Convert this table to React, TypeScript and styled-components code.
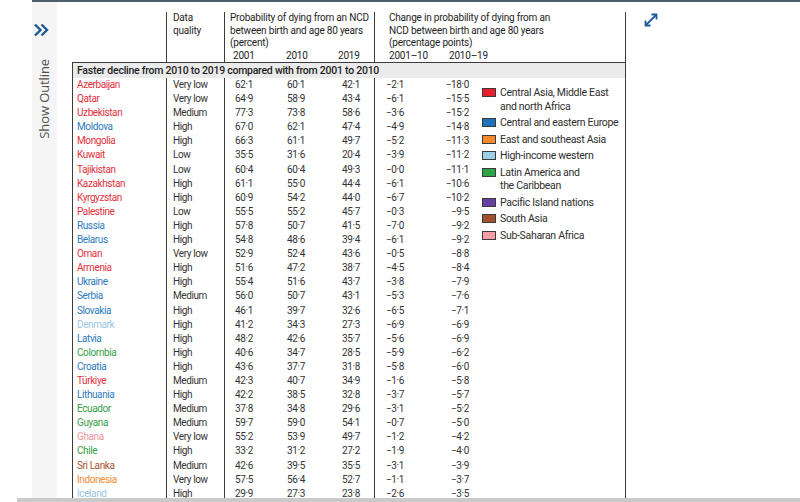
import React from "react";
import styled, { createGlobalStyle } from "styled-components";

const GlobalStyle = createGlobalStyle`
  html, body { margin: 0; padding: 0; background: #fff; }
  body {
    font-family: Roboto, "Liberation Sans", sans-serif;
    color: #333;
  }
`;

type Region = "cam" | "cee" | "ese" | "hiw" | "lac" | "pac" | "sa" | "ssa";

const regionColor: Record<Region, string> = {
  cam: "#e3303a",
  cee: "#2b7bbd",
  ese: "#f28a30",
  hiw: "#98c6e4",
  lac: "#36a047",
  pac: "#6a4aa0",
  sa: "#a5552a",
  ssa: "#f0959b",
};

const swatchColor: Record<Region, string> = {
  cam: "#e8202c",
  cee: "#1f72b8",
  ese: "#f6892c",
  hiw: "#9ecde6",
  lac: "#2ea446",
  pac: "#6441a0",
  sa: "#a0522d",
  ssa: "#f4a0a6",
};

type Row = [string, Region, string, string, string, string, string, string];

const rows: Row[] = [
  ["Azerbaijan", "cam", "Very low", "62·1", "60·1", "42·1", "−2·1", "−18·0"],
  ["Qatar", "cam", "Very low", "64·9", "58·9", "43·4", "−6·1", "−15·5"],
  ["Uzbekistan", "cam", "Medium", "77·3", "73·8", "58·6", "−3·6", "−15·2"],
  ["Moldova", "cee", "High", "67·0", "62·1", "47·4", "−4·9", "−14·8"],
  ["Mongolia", "cam", "High", "66·3", "61·1", "49·7", "−5·2", "−11·3"],
  ["Kuwait", "cam", "Low", "35·5", "31·6", "20·4", "−3·9", "−11·2"],
  ["Tajikistan", "cam", "Low", "60·4", "60·4", "49·3", "−0·0", "−11·1"],
  ["Kazakhstan", "cam", "High", "61·1", "55·0", "44·4", "−6·1", "−10·6"],
  ["Kyrgyzstan", "cam", "High", "60·9", "54·2", "44·0", "−6·7", "−10·2"],
  ["Palestine", "cam", "Low", "55·5", "55·2", "45·7", "−0·3", "−9·5"],
  ["Russia", "cee", "High", "57·8", "50·7", "41·5", "−7·0", "−9·2"],
  ["Belarus", "cee", "High", "54·8", "48·6", "39·4", "−6·1", "−9·2"],
  ["Oman", "cam", "Very low", "52·9", "52·4", "43·6", "−0·5", "−8·8"],
  ["Armenia", "cam", "High", "51·6", "47·2", "38·7", "−4·5", "−8·4"],
  ["Ukraine", "cee", "High", "55·4", "51·6", "43·7", "−3·8", "−7·9"],
  ["Serbia", "cee", "Medium", "56·0", "50·7", "43·1", "−5·3", "−7·6"],
  ["Slovakia", "cee", "High", "46·1", "39·7", "32·6", "−6·5", "−7·1"],
  ["Denmark", "hiw", "High", "41·2", "34·3", "27·3", "−6·9", "−6·9"],
  ["Latvia", "cee", "High", "48·2", "42·6", "35·7", "−5·6", "−6·9"],
  ["Colombia", "lac", "High", "40·6", "34·7", "28·5", "−5·9", "−6·2"],
  ["Croatia", "cee", "High", "43·6", "37·7", "31·8", "−5·8", "−6·0"],
  ["Türkiye", "cam", "Medium", "42·3", "40·7", "34·9", "−1·6", "−5·8"],
  ["Lithuania", "cee", "High", "42·2", "38·5", "32·8", "−3·7", "−5·7"],
  ["Ecuador", "lac", "Medium", "37·8", "34·8", "29·6", "−3·1", "−5·2"],
  ["Guyana", "lac", "Medium", "59·7", "59·0", "54·1", "−0·7", "−5·0"],
  ["Ghana", "ssa", "Very low", "55·2", "53·9", "49·7", "−1·2", "−4·2"],
  ["Chile", "lac", "High", "33·2", "31·2", "27·2", "−1·9", "−4·0"],
  ["Sri Lanka", "sa", "Medium", "42·6", "39·5", "35·5", "−3·1", "−3·9"],
  ["Indonesia", "ese", "Very low", "57·5", "56·4", "52·7", "−1·1", "−3·7"],
  ["Iceland", "hiw", "High", "29·9", "27·3", "23·8", "−2·6", "−3·5"],
];

const legend: { region: Region; lines: string[] }[] = [
  { region: "cam", lines: ["Central Asia, Middle East", "and north Africa"] },
  { region: "cee", lines: ["Central and eastern Europe"] },
  { region: "ese", lines: ["East and southeast Asia"] },
  { region: "hiw", lines: ["High-income western"] },
  { region: "lac", lines: ["Latin America and", "the Caribbean"] },
  { region: "pac", lines: ["Pacific Island nations"] },
  { region: "sa", lines: ["South Asia"] },
  { region: "ssa", lines: ["Sub-Saharan Africa"] },
];

const LINE = "#3c3c3c";

const Page = styled.div`
  position: relative;
  width: 800px;
  height: 502px;
  overflow: hidden;
  display: flex;
  background: #fff;
`;

const Gutter = styled.div`
  width: 32px;
  flex: none;
`;

const Frame = styled.div`
  flex: 1;
  min-width: 0;
  display: flex;
  flex-direction: column;
  border-top: 2px solid #4b5e6a;
`;

const FrameBody = styled.div`
  flex: 1;
  display: flex;
  min-height: 0;
`;

const Sidebar = styled.aside`
  width: 25px;
  flex: none;
  background: #f5f5f5;
  display: flex;
  flex-direction: column;
  align-items: flex-start;
  padding: 21px 0 0 1px;
  box-sizing: border-box;
`;

const OutlineLabel = styled.span`
  margin: 22px 0 0 3px;
  writing-mode: vertical-rl;
  transform: rotate(180deg);
  font-family: "Open Sans", "Liberation Sans", sans-serif;
  font-size: 13px;
  line-height: 17px;
  letter-spacing: -0.1px;
  color: #505050;
  white-space: nowrap;
`;

const Content = styled.main`
  flex: 1;
  display: flex;
  align-items: flex-start;
  padding: 10px 0 0 15px;
  gap: 17px;
`;

const Table = styled.div`
  width: 554px;
  flex: none;
  display: flex;
  flex-direction: column;
`;

const HeaderRow = styled.div`
  display: flex;
  height: 50px;
  border-right: 1px solid ${LINE};
  font-size: 10px;
  line-height: 12.5px;
  letter-spacing: -0.2px;
  color: #1e1e1e;
`;

const HeadBlank = styled.div`
  width: 94px;
  flex: none;
`;

const HeadCell = styled.div<{ $w: number; $pad: number }>`
  width: ${(p) => p.$w}px;
  flex: none;
  box-sizing: border-box;
  border-left: 1px solid ${LINE};
  padding-left: ${(p) => p.$pad}px;
  display: flex;
  flex-direction: column;
`;

const HeadTitle = styled.div<{ $pad: number }>`
  height: 37.5px;
  padding-left: ${(p) => p.$pad}px;
  white-space: nowrap;
`;

const YearRow = styled.div<{ $cols: string }>`
  display: grid;
  grid-template-columns: ${(p) => p.$cols};
  white-space: nowrap;
`;

const YearLabel = styled.span<{ $pad: number }>`
  padding-left: ${(p) => p.$pad}px;
`;

const BodyFrame = styled.div`
  display: flex;
  flex-direction: column;
  border-left: 1px solid ${LINE};
  border-right: 1px solid ${LINE};
`;

const GroupRow = styled.div`
  border-top: 1px solid ${LINE};
  background: #ebebeb;
  height: 15px;
  line-height: 15px;
  padding-left: 4px;
  font-size: 10.5px;
  font-weight: 500;
  letter-spacing: -0.25px;
  color: #1e1e1e;
  white-space: nowrap;
`;

const BodyArea = styled.div`
  display: flex;
`;

const RowsColumn = styled.div`
  width: 399px;
  flex: none;
  display: flex;
  flex-direction: column;
`;

const DataRow = styled.div`
  display: grid;
  grid-template-columns: 93px 58px 56px 55px 39px 56px 42px;
  height: 14.1px;
  line-height: 14.1px;
  font-size: 10px;
  letter-spacing: -0.4px;
  white-space: nowrap;
`;

const Cell = styled.span<{ $pad?: number; $sep?: boolean; $right?: boolean }>`
  box-sizing: border-box;
  padding-left: ${(p) => p.$pad ?? 0}px;
  padding-right: ${(p) => (p.$right ? 3 : 0)}px;
  text-align: ${(p) => (p.$right ? "right" : "left")};
  border-left: ${(p) => (p.$sep ? `1px solid ${LINE}` : "none")};
  color: #333;
`;

const Country = styled(Cell)<{ $region: Region }>`
  color: ${(p) => regionColor[p.$region]};
`;

const LegendColumn = styled.div`
  width: 153px;
  flex: none;
  padding: 8px 0 0 10px;
  box-sizing: border-box;
  display: flex;
  flex-direction: column;
  gap: 3px;
`;

const LegendItem = styled.div`
  display: flex;
  align-items: flex-start;
  gap: 4px;
  font-size: 10.5px;
  line-height: 13.5px;
  letter-spacing: -0.3px;
  color: #2e2e2e;
  white-space: nowrap;
`;

const Swatch = styled.span<{ $region: Region }>`
  width: 14px;
  height: 9px;
  flex: none;
  margin-top: 2px;
  box-sizing: border-box;
  border: 1px solid #3a3a3a;
  background: ${(p) => swatchColor[p.$region]};
`;

const ExpandButton = styled.button`
  border: none;
  background: none;
  padding: 0;
  width: 16px;
  height: 16px;
  display: flex;
  color: #1d5d99;
  cursor: pointer;
`;

const Scrollbar = styled.div`
  position: absolute;
  left: 17px;
  right: 0;
  bottom: 0;
  height: 4px;
  background: #cacaca;
`;

const Chevrons = () => (
  <svg width="16" height="14" viewBox="0 0 16 14" fill="none">
    <path d="M2 1.5 L7.5 7 L2 12.5 M8.5 1.5 L14 7 L8.5 12.5" stroke="#1d5b95" strokeWidth="2.4" strokeLinejoin="miter" />
  </svg>
);

const ExpandIcon = () => (
  <svg width="16" height="16" viewBox="0 0 16 16" fill="none">
    <path d="M3 13 L13 3" stroke="currentColor" strokeWidth="1.8" />
    <path d="M8.5 2.5 H13.5 V7.5" stroke="currentColor" strokeWidth="1.8" />
    <path d="M2.5 8.5 V13.5 H7.5" stroke="currentColor" strokeWidth="1.8" />
  </svg>
);

export default function App() {
  return (
    <>
      <GlobalStyle />
      <Page>
        <Gutter />
        <Frame>
          <FrameBody>
            <Sidebar>
              <Chevrons />
              <OutlineLabel>Show Outline</OutlineLabel>
            </Sidebar>
            <Content>
              <Table>
                <HeaderRow>
                  <HeadBlank />
                  <HeadCell $w={58} $pad={6}>
                    <span>Data</span>
                    <span>quality</span>
                  </HeadCell>
                  <HeadCell $w={150} $pad={0}>
                    <HeadTitle $pad={5}>
                      Probability of dying from an NCD
                      <br />
                      between birth and age 80 years
                      <br />
                      (percent)
                    </HeadTitle>
                    <YearRow $cols="55px 55px 39px">
                      <YearLabel $pad={8}>2001</YearLabel>
                      <YearLabel $pad={6}>2010</YearLabel>
                      <YearLabel $pad={3}>2019</YearLabel>
                    </YearRow>
                  </HeadCell>
                  <HeadCell $w={251} $pad={0}>
                    <HeadTitle $pad={14}>
                      Change in probability of dying from an
                      <br />
                      NCD between birth and age 80 years
                      <br />
                      (percentage points)
                    </HeadTitle>
                    <YearRow $cols="55px 42px 153px">
                      <YearLabel $pad={14}>2001–10</YearLabel>
                      <YearLabel $pad={19}>2010–19</YearLabel>
                    </YearRow>
                  </HeadCell>
                </HeaderRow>
                <BodyFrame>
                  <GroupRow>Faster decline from 2010 to 2019 compared with from 2001 to 2010</GroupRow>
                  <BodyArea>
                    <RowsColumn>
                      {rows.map(([name, region, quality, a, b, c, d, e]) => (
                        <DataRow key={name}>
                          <Country $region={region} $pad={4}>
                            {name}
                          </Country>
                          <Cell $sep $pad={6}>
                            {quality}
                          </Cell>
                          <Cell $sep $pad={10}>
                            {a}
                          </Cell>
                          <Cell $pad={7}>{b}</Cell>
                          <Cell $pad={7}>{c}</Cell>
                          <Cell $sep $pad={11}>
                            {d}
                          </Cell>
                          <Cell $right>{e}</Cell>
                        </DataRow>
                      ))}
                    </RowsColumn>
                    <LegendColumn>
                      {legend.map((item) => (
                        <LegendItem key={item.region}>
                          <Swatch $region={item.region} />
                          <span>
                            {item.lines.map((l, i) => (
                              <React.Fragment key={l}>
                                {i > 0 && <br />}
                                {l}
                              </React.Fragment>
                            ))}
                          </span>
                        </LegendItem>
                      ))}
                    </LegendColumn>
                  </BodyArea>
                </BodyFrame>
              </Table>
              <ExpandButton aria-label="Expand">
                <ExpandIcon />
              </ExpandButton>
            </Content>
          </FrameBody>
        </Frame>
        <Scrollbar />
      </Page>
    </>
  );
}
